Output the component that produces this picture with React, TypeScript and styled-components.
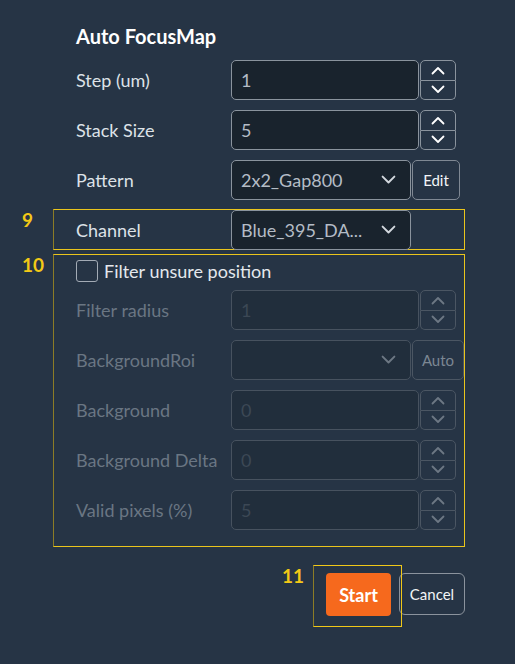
import { FC, ReactNode } from 'react'
import styled, { createGlobalStyle } from 'styled-components'

const GlobalStyle = createGlobalStyle`
  html, body {
    margin: 0;
    padding: 0;
    background: #263445;
  }
  body {
    font-family: Lato, "Open Sans", "Liberation Sans", sans-serif;
    color: #dfe4ea;
  }
`

const Page = styled.div`
  width: 515px;
  height: 664px;
  box-sizing: border-box;
  padding: 23px 50px 0 53px;
  display: flex;
  flex-direction: column;
`

const Title = styled.h2`
  margin: 0 0 11px 23px;
  font-size: 20px;
  font-weight: 700;
  color: #ffffff;
  line-height: 26px;
`

const Rows = styled.div`
  display: flex;
  flex-direction: column;
  gap: 10px;
`

// A plain row and an annotated row share the same 1px frame so labels line up
const Row = styled.div`
  display: flex;
  align-items: center;
  height: 40px;
  padding-left: 22px;
  border-left: 1px solid transparent;
`

const Label = styled.span<{ $muted?: boolean }>`
  width: 155px;
  flex-shrink: 0;
  font-size: 18px;
  color: ${({ $muted }) => ($muted ? '#6a7683' : '#dde2e8')};
  white-space: nowrap;
`

const Field = styled.div<{ $width: number; $muted?: boolean }>`
  box-sizing: border-box;
  width: ${({ $width }) => $width}px;
  height: 40px;
  flex-shrink: 0;
  display: flex;
  align-items: center;
  padding: 0 14px 0 9px;
  border: 1px solid ${({ $muted }) => ($muted ? '#47525f' : '#8a939d')};
  border-radius: 5px;
  background: ${({ $muted }) => ($muted ? '#212e3c' : '#19232d')};
  font-size: 18px;
  color: ${({ $muted }) => ($muted ? '#3c4855' : '#b4bcc6')};
`

const FieldText = styled.span`
  flex: 1;
  white-space: nowrap;
  overflow: hidden;
`

const Spinner = styled.div`
  margin-left: 1px;
  width: 36px;
  height: 40px;
  display: flex;
  flex-direction: column;
`

const SpinHalf = styled.div<{ $muted?: boolean }>`
  box-sizing: border-box;
  flex: 1;
  display: flex;
  align-items: center;
  justify-content: center;
  border: 1px solid ${({ $muted }) => ($muted ? '#4b5663' : '#8a939d')};
  color: ${({ $muted }) => ($muted ? '#6d7884' : '#ffffff')};

  &:first-child {
    border-radius: 5px 5px 0 0;
  }
  &:last-child {
    border-radius: 0 0 5px 5px;
    border-top: none;
  }
`

const SideButton = styled.div<{ $width: number; $muted?: boolean }>`
  box-sizing: border-box;
  margin-left: 1px;
  width: ${({ $width }) => $width}px;
  height: 40px;
  display: flex;
  align-items: center;
  justify-content: center;
  border: 1px solid ${({ $muted }) => ($muted ? '#4b5663' : '#7f8893')};
  border-radius: 5px;
  font-size: 15px;
  color: ${({ $muted }) => ($muted ? '#7c8793' : '#f2f4f7')};
`

const Annotated = styled.div`
  position: relative;
  border: 1px solid #eac51c;
  border-left-color: #8c7c26;
`

const Marker = styled.span`
  position: absolute;
  left: -32px;
  top: -1px;
  font-size: 19px;
  font-weight: 700;
  color: #f3c916;
  line-height: 22px;
`

const ChannelBox = styled(Annotated)`
  margin-top: 9px;
  height: 39px;

  ${Row} {
    border-left: none;
  }
`

const FilterBox = styled(Annotated)`
  margin-top: 4px;
  height: 293px;
  box-sizing: border-box;
  padding-top: 5px;

  ${Row} {
    border-left: none;
  }
`

const CheckRow = styled.label`
  display: flex;
  align-items: center;
  gap: 6px;
  height: 22px;
  padding-left: 22px;
  margin-bottom: 8px;
  font-size: 18px;
  color: #e4e8ed;
`

const CheckBox = styled.span`
  box-sizing: border-box;
  width: 22px;
  height: 22px;
  border: 1px solid #a3abb5;
  border-radius: 3px;
`

const Footer = styled.div`
  margin-top: 18px;
  display: flex;
  justify-content: flex-end;
  align-items: flex-start;
`

const StartFrame = styled.div`
  position: relative;
  box-sizing: border-box;
  width: 89px;
  height: 62px;
  padding: 7px 0 0 12px;
  border-top: 1px solid #f0c818;
  border-right: 1px solid #f0c818;
  border-bottom: 1px solid #f0c818;
  border-left: 1px solid #8c7c26;
`

const StartButton = styled.button`
  display: block;
  width: 65px;
  height: 43px;
  border: none;
  border-radius: 4px;
  background: #f6691d;
  color: #ffffff;
  font-family: inherit;
  font-size: 18px;
  font-weight: 700;
`

const CancelButton = styled.button`
  margin-top: 8px;
  margin-left: -3px;
  width: 66px;
  height: 42px;
  border: 1px solid #8b939d;
  border-radius: 6px;
  background: transparent;
  color: #f2f4f7;
  font-family: inherit;
  font-size: 15px;
`

const Chevron: FC<{ up?: boolean; size?: number; color?: string }> = ({ up, size = 14, color = 'currentColor' }) => (
  <svg width={size} height={(size * 9) / 14} viewBox="0 0 14 9" fill="none">
    <path
      d={up ? 'M1.5 7.5 L7 2 L12.5 7.5' : 'M1.5 1.5 L7 7 L12.5 1.5'}
      stroke={color}
      strokeWidth="1.8"
      strokeLinecap="round"
      strokeLinejoin="round"
    />
  </svg>
)

const NumberRow: FC<{ label: string; value: string; muted?: boolean }> = ({ label, value, muted }) => (
  <Row>
    <Label $muted={muted}>{label}</Label>
    <Field $width={188} $muted={muted}>
      <FieldText>{value}</FieldText>
    </Field>
    <Spinner>
      <SpinHalf $muted={muted}>
        <Chevron up />
      </SpinHalf>
      <SpinHalf $muted={muted}>
        <Chevron />
      </SpinHalf>
    </Spinner>
  </Row>
)

const SelectRow: FC<{ label: string; value: string; muted?: boolean; children?: ReactNode }> = ({
  label,
  value,
  muted,
  children,
}) => (
  <Row>
    <Label $muted={muted}>{label}</Label>
    <Field $width={180} $muted={muted}>
      <FieldText>{value}</FieldText>
      <Chevron color={muted ? '#6d7884' : '#d3d8de'} size={15} />
    </Field>
    {children}
  </Row>
)

const App: FC = () => (
  <>
    <GlobalStyle />
    <Page>
      <Title>Auto FocusMap</Title>
      <Rows>
        <NumberRow label="Step (um)" value="1" />
        <NumberRow label="Stack Size" value="5" />
        <SelectRow label="Pattern" value="2x2_Gap800">
          <SideButton $width={48}>Edit</SideButton>
        </SelectRow>
      </Rows>

      <ChannelBox>
        <Marker>9</Marker>
        <SelectRow label="Channel" value="Blue_395_DA..." />
      </ChannelBox>

      <FilterBox>
        <Marker>10</Marker>
        <CheckRow>
          <CheckBox />
          Filter unsure position
        </CheckRow>
        <Rows>
          <NumberRow label="Filter radius" value="1" muted />
          <SelectRow label="BackgroundRoi" value="" muted>
            <SideButton $width={54} $muted>
              Auto
            </SideButton>
          </SelectRow>
          <NumberRow label="Background" value="0" muted />
          <NumberRow label="Background Delta" value="0" muted />
          <NumberRow label="Valid pixels (%)" value="5" muted />
        </Rows>
      </FilterBox>

      <Footer>
        <StartFrame>
          <Marker>11</Marker>
          <StartButton>Start</StartButton>
        </StartFrame>
        <CancelButton>Cancel</CancelButton>
      </Footer>
    </Page>
  </>
)

export default App
